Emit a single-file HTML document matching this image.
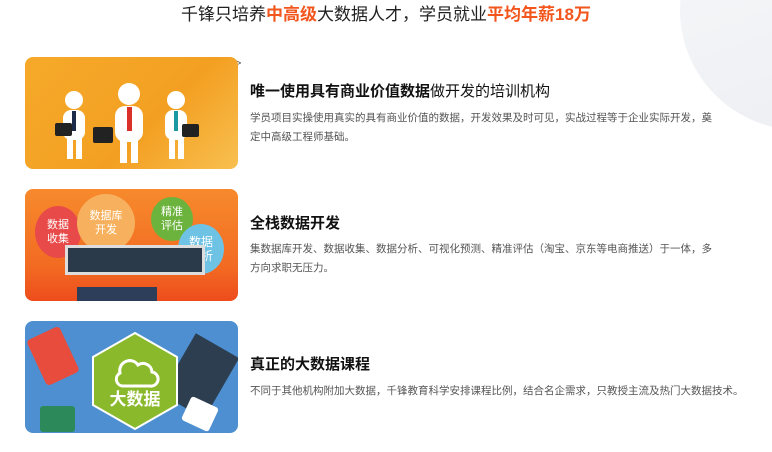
<!DOCTYPE html><html><head><meta charset="utf-8"><style>
*{margin:0;padding:0;box-sizing:border-box}
body{width:772px;height:452px;background:#fff;position:relative;overflow:hidden;font-family:"Liberation Sans","Noto Sans CJK SC",sans-serif;color:#333}
.circ{position:absolute;left:680px;top:-110px;width:240px;height:240px;border-radius:50%;background:linear-gradient(160deg,#f7f8fa,#eceef2)}
.t{position:absolute;top:3px;left:0;width:772px;text-align:center;font-size:17px;color:#222;line-height:24px}
.t b{color:#f2561d}
.img{position:absolute;left:25px;width:213px;height:112px;border-radius:8px;overflow:hidden}
.h{position:absolute;left:250px;font-size:15px;font-weight:bold;color:#111}
.h span{font-weight:normal}
.p{position:absolute;left:250px;width:470px;font-size:10.5px;line-height:19px;color:#555}
.bub{position:absolute;border-radius:50%;color:#fff;font-size:11px;text-align:center;line-height:14px;display:flex;align-items:center;justify-content:center}
</style></head><body>
<div class="circ"></div>
<div class="t">千锋只培养<b>中高级</b>大数据人才，学员就业<b>平均年薪18万</b></div>
<div style="position:absolute;left:236px;top:58px;font-size:9px">&gt;</div>

<div class="img" style="top:57px;background:linear-gradient(135deg,#f6a92a,#f3a022 60%,#f8c050)">
<svg width="213" height="112">
<g fill="#fff"><circle cx="49" cy="43" r="9"/><rect x="38" y="53" width="22" height="30" rx="8"/><rect x="42" y="78" width="6" height="24"/><rect x="51" y="78" width="6" height="24"/>
<circle cx="104" cy="37" r="11"/><rect x="90" y="49" width="28" height="36" rx="10"/><rect x="95" y="80" width="7" height="26"/><rect x="106" y="80" width="7" height="26"/>
<circle cx="151" cy="43" r="9"/><rect x="140" y="53" width="22" height="30" rx="8"/><rect x="144" y="78" width="6" height="24"/><rect x="153" y="78" width="6" height="24"/></g>
<rect x="47" y="54" width="4" height="20" fill="#1d2b4a"/><rect x="102" y="50" width="5" height="24" fill="#d9312a"/><rect x="149" y="54" width="4" height="20" fill="#1a9aa0"/>
<g fill="#222"><rect x="30" y="66" width="17" height="13" rx="2"/><rect x="68" y="70" width="20" height="16" rx="2"/><rect x="157" y="67" width="17" height="13" rx="2"/></g>
</svg></div>
<div class="h" style="top:80px">唯一使用具有商业价值数据<span>做开发的培训机构</span></div>
<div class="p" style="top:109px">学员项目实操使用真实的具有商业价值的数据，开发效果及时可见，实战过程等于企业实际开发，奠定中高级工程师基础。</div>

<div class="img" style="top:189px;background:linear-gradient(#f78a2c,#f26a22 70%,#ee4c1c)">
<div class="bub" style="left:10px;top:17px;width:46px;height:52px;background:#e84a4a">数据<br>收集</div>
<div class="bub" style="left:52px;top:5px;width:58px;height:58px;background:#f7b15e">数据库<br>开发</div>
<div class="bub" style="left:126px;top:8px;width:42px;height:44px;background:#6cb33e">精准<br>评估</div>
<div class="bub" style="left:153px;top:35px;width:46px;height:50px;background:#6ec2e4;font-size:12px">数据<br>分析</div>
<div style="position:absolute;left:40px;top:56px;width:140px;height:30px;background:#2a3a4a;border:3px solid #ddd"></div>
<div style="position:absolute;left:52px;top:98px;width:80px;height:14px;background:#2c3e5a"></div>
</div>
<div class="h" style="top:212px">全栈数据开发</div>
<div class="p" style="top:240px">集数据库开发、数据收集、数据分析、可视化预测、精准评估（淘宝、京东等电商推送）于一体，多方向求职无压力。</div>

<div class="img" style="top:321px;background:#4d8fd0">
<svg width="213" height="112">
<rect x="10" y="10" width="36" height="50" rx="4" fill="#e84c3d" transform="rotate(-25 28 35)"/>
<rect x="150" y="20" width="50" height="70" fill="#2c3e50" transform="rotate(30 175 55)"/>
<rect x="160" y="80" width="30" height="26" rx="3" fill="#fff" transform="rotate(25 175 93)"/>
<rect x="15" y="85" width="35" height="26" rx="3" fill="#2c8a5a"/>
<polygon points="110,12 152,36 152,84 110,108 68,84 68,36" fill="#8ab92c" stroke="#fff" stroke-width="2"/>
<path d="M95 52a10 10 0 0 1 18-8a9 9 0 0 1 14 7a7 7 0 0 1-2 14h-28a7 7 0 0 1-2-13z" fill="none" stroke="#fff" stroke-width="3"/>
<text x="110" y="84" fill="#fff" font-size="17" font-weight="bold" text-anchor="middle" font-family="Noto Sans CJK SC,sans-serif">大数据</text>
</svg></div>
<div class="h" style="top:353px">真正的大数据课程</div>
<div class="p" style="top:382px;width:520px">不同于其他机构附加大数据，千锋教育科学安排课程比例，结合名企需求，只教授主流及热门大数据技术。</div>
</body></html>
